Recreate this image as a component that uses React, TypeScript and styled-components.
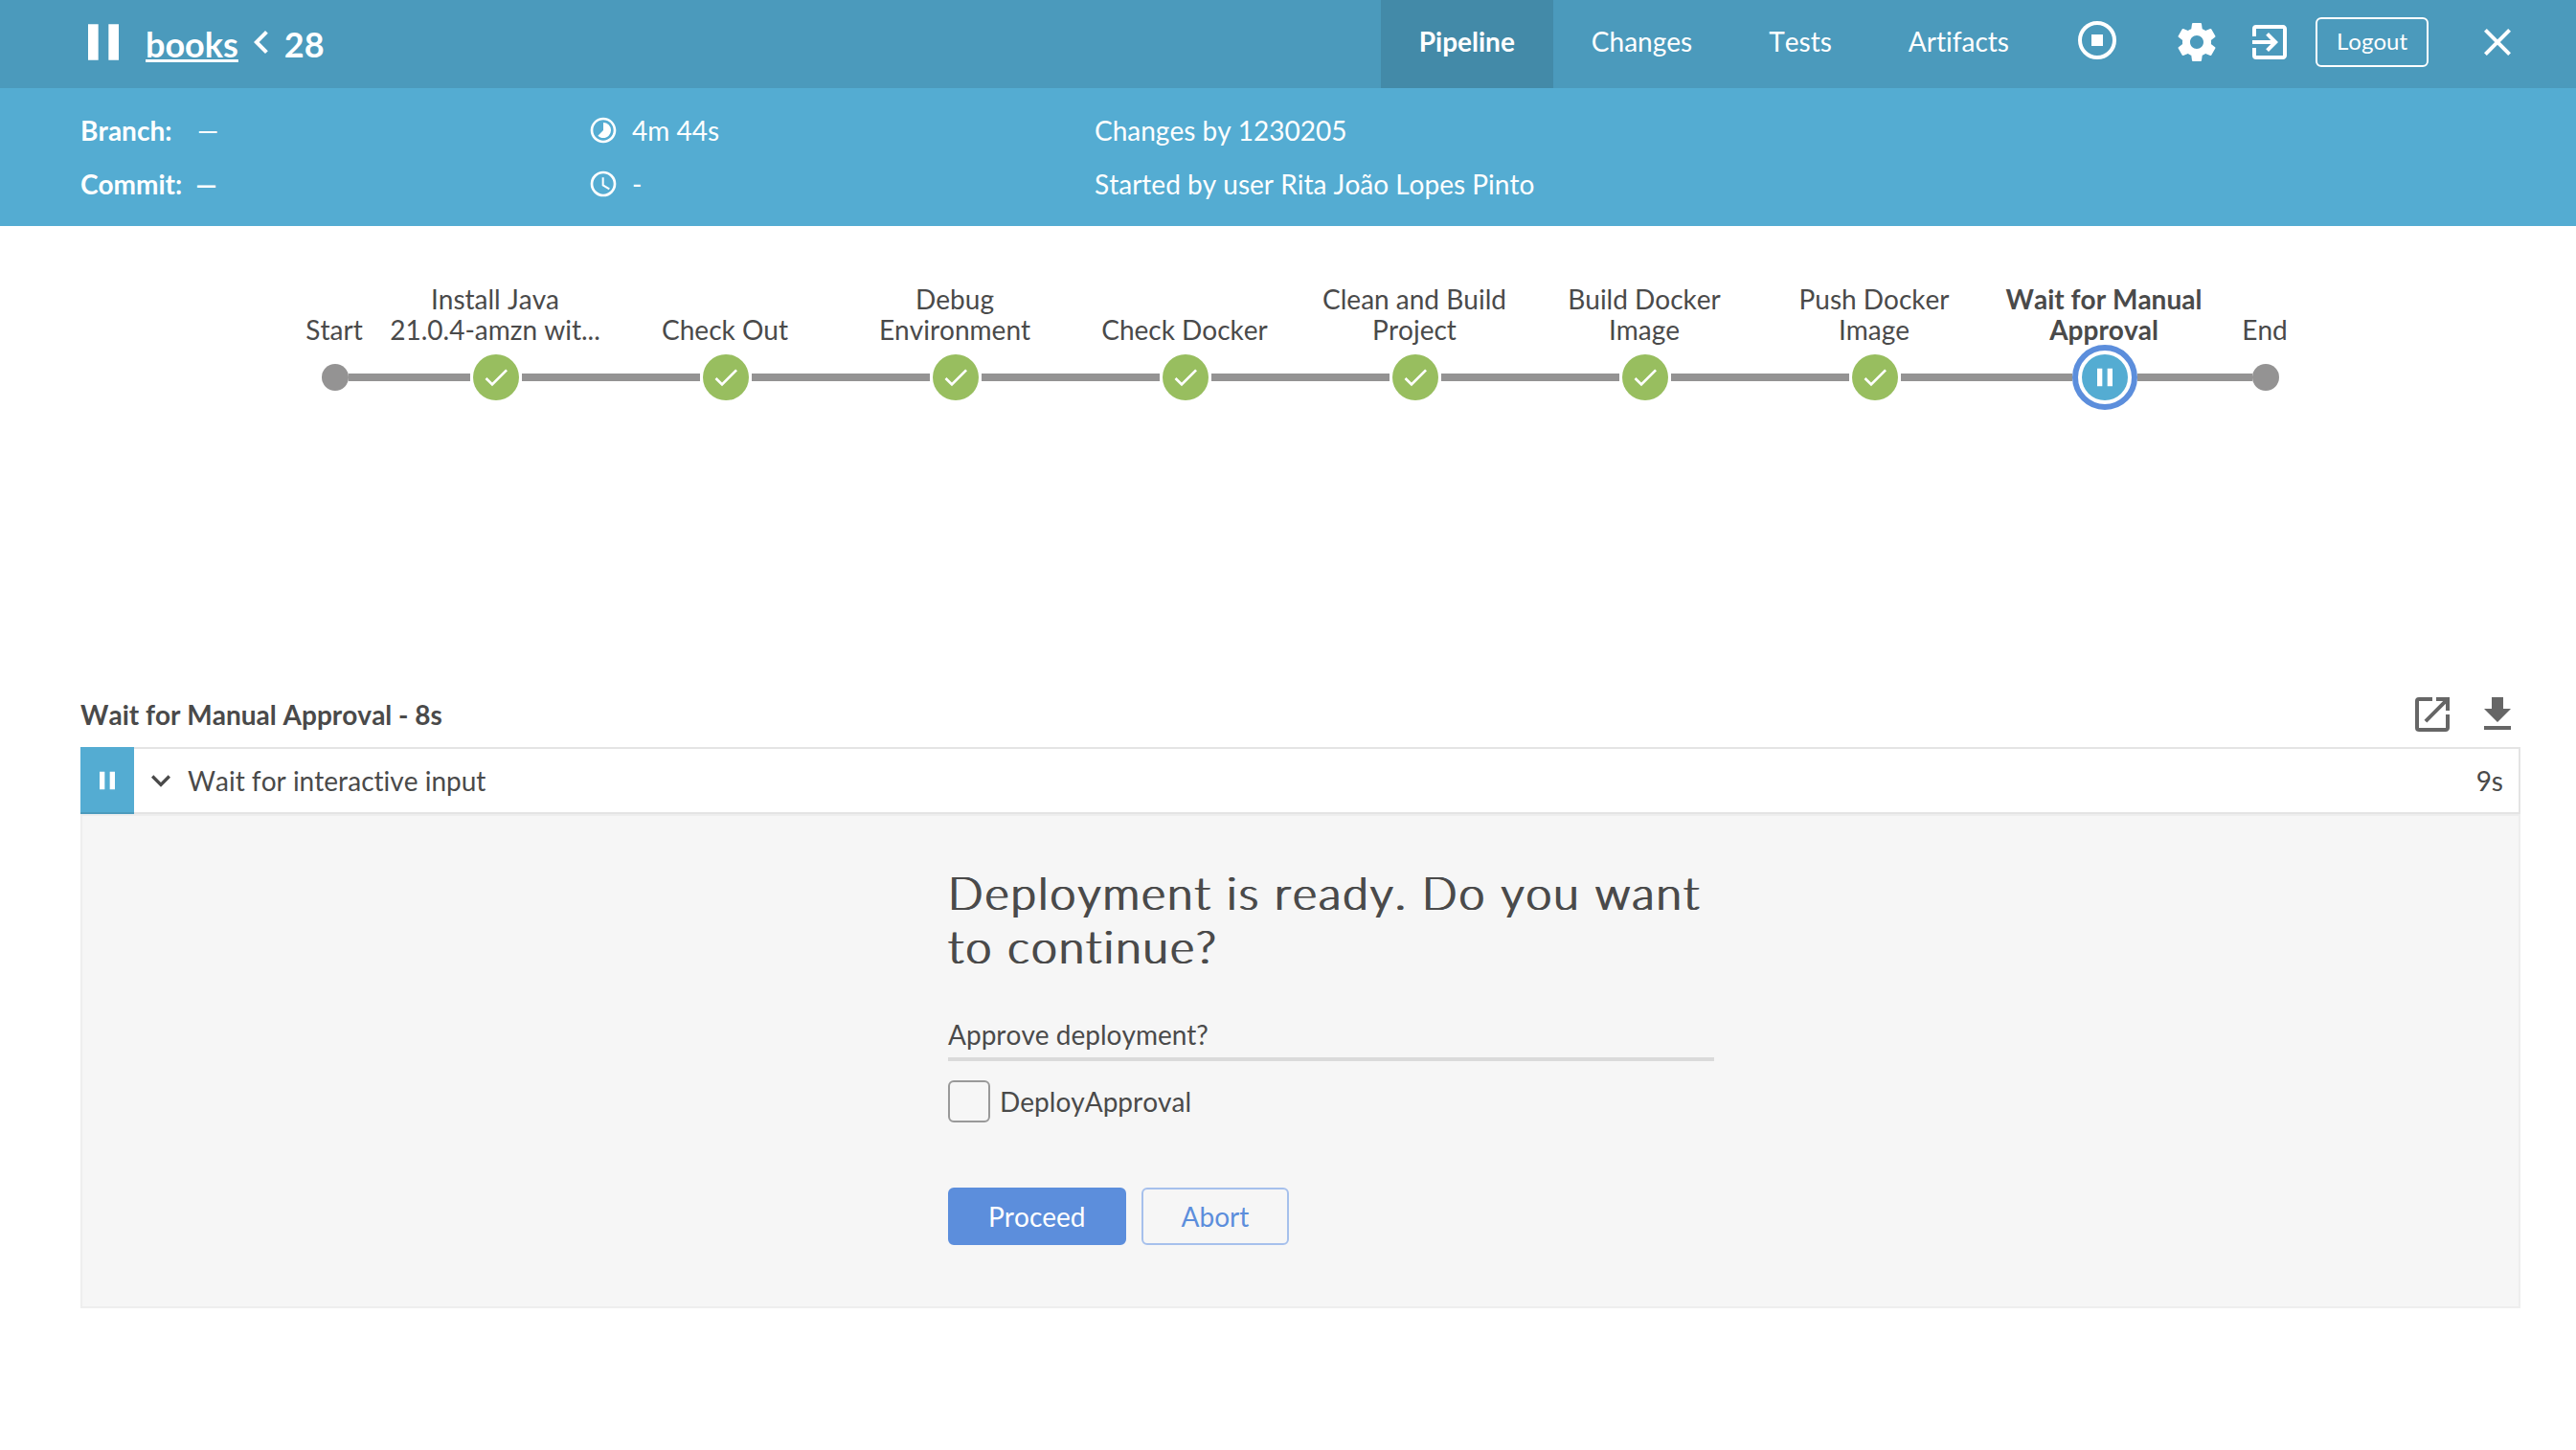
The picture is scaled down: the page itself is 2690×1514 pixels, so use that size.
import React from 'react';
import styled, { createGlobalStyle } from 'styled-components';
import {
  MdCheck,
  MdClose,
  MdExitToApp,
  MdExpandMore,
  MdFileDownload,
  MdKeyboardArrowLeft,
  MdOpenInNew,
  MdPause,
  MdTimelapse,
} from 'react-icons/md';

const blue = '#54acd2';
const accent = '#5c8edc';
const ink = '#4a4a4a';
const track = '#949393';

const GlobalStyle = createGlobalStyle`
  * { box-sizing: border-box; }
  body {
    margin: 0;
    background: #fff;
    color: ${ink};
    font: 28px/32px Lato, "Open Sans", sans-serif;
    font-kerning: none;
    font-variant-ligatures: none;
  }
  svg { display: block; flex: none; }
`;

const Header = styled.header`
  background: ${blue};
  color: #fff;
`;

const TopBar = styled.div`
  display: flex;
  align-items: stretch;
  height: 92px;
  padding: 0 58px 0 76px;
  background: rgba(0, 0, 0, 0.1);
`;

const Title = styled.h1`
  flex: 1;
  display: flex;
  align-items: center;
  margin: 0;
  padding-bottom: 4px;
  font-size: 36px;
  line-height: 44px;
  font-weight: 700;
`;

const TitleText = styled.span`
  padding-top: 4px;
`;

const PipelineLink = styled.a`
  color: inherit;
  margin-left: 12px;
  padding-top: 4px;
  text-decoration: underline;
`;

const Tabs = styled.nav`
  display: flex;
`;

const Tab = styled.a<{ $active?: boolean }>`
  display: flex;
  align-items: center;
  padding: 0 40px 6px;
  color: #fff;
  text-decoration: none;
  font-weight: ${(p) => (p.$active ? 700 : 400)};
  background: ${(p) => (p.$active ? 'rgba(0, 0, 0, 0.1)' : 'none')};
`;

const Tools = styled.div`
  display: flex;
  align-items: center;
  padding: 0 0 4px 28px;
`;

const IconButton = styled.button<{ $gap?: number }>`
  display: flex;
  padding: 0;
  margin: 0 0 0 ${(p) => p.$gap ?? 0}px;
  border: 0;
  background: none;
  color: inherit;
  cursor: pointer;
`;

const Logout = styled.button`
  height: 52px;
  margin-left: 24px;
  padding: 0 20px 2px;
  border: 2px solid #fff;
  border-radius: 6px;
  background: none;
  color: #fff;
  font: 24px/32px Lato, sans-serif;
  font-kerning: none;
  cursor: pointer;
`;

const Details = styled.div`
  display: grid;
  grid-template-columns: 530px 529px 1fr;
  row-gap: 24px;
  padding: 28px 58px 28px 84px;
`;

const Detail = styled.div`
  display: flex;
  align-items: center;
  gap: 14px;
`;

const Label = styled.span`
  font-weight: 700;
`;

const BranchLabel = styled(Label)`
  min-width: 108px;
`;

const Value = styled.span<{ $bold?: boolean }>`
  font-weight: ${(p) => (p.$bold ? 700 : 400)};
`;

const Main = styled.main`
  padding: 60px 58px 0 84px;
`;

const Graph = styled.ol`
  display: flex;
  justify-content: center;
  margin: 0;
  padding: 0;
  min-height: 420px;
  list-style: none;
`;

const Stage = styled.li<{ $end?: boolean }>`
  display: flex;
  flex-direction: column;
  width: ${(p) => (p.$end ? 96 : 240)}px;
`;

const StageLabel = styled.span<{ $bold?: boolean }>`
  display: flex;
  flex-direction: column;
  justify-content: flex-end;
  height: 64px;
  padding: 0 10px 0 8px;
  text-align: center;
  font-weight: ${(p) => (p.$bold ? 700 : 400)};
`;

const NodeRow = styled.span`
  display: flex;
  align-items: center;
  height: 68px;
`;

const Line = styled.span<{ $hidden?: boolean }>`
  flex: 1;
  height: 8px;
  background: ${(p) => (p.$hidden ? 'transparent' : track)};
`;

const Dot = styled.span`
  width: 28px;
  height: 28px;
  border-radius: 50%;
  background: ${track};
`;

const Done = styled.span`
  display: grid;
  place-items: center;
  width: 48px;
  height: 48px;
  margin: 0 3px;
  border-radius: 50%;
  background: #98be5f;
  color: #fff;
`;

const Paused = styled.button`
  display: grid;
  place-items: center;
  width: 68px;
  height: 68px;
  padding: 4px;
  border: 6px solid ${accent};
  border-radius: 50%;
  background: ${blue};
  background-clip: content-box;
  color: #fff;
`;

const StepsHeader = styled.div`
  display: flex;
  align-items: flex-start;
  justify-content: space-between;
  height: 64px;
  padding-top: 6px;
  color: #666;
`;

const StepsTitle = styled.h2`
  margin: 0;
  font-size: 28px;
  line-height: 48px;
  color: ${ink};
`;

const Actions = styled.div`
  display: flex;
  gap: 20px;
`;

const Step = styled.div`
  display: flex;
  height: 70px;
  border: 2px solid #e4e4e4;
  border-left: 0;
`;

const StepStatus = styled.span`
  display: grid;
  place-items: center;
  width: 56px;
  margin: -2px 0;
  padding-top: 2px;
  background: ${blue};
  border-bottom: 2px solid #4c9bbd;
  color: #fff;
`;

const StepToggle = styled.button`
  flex: 1;
  display: flex;
  align-items: center;
  gap: 8px;
  padding: 0 16px 0 8px;
  border: 0;
  background: none;
  color: inherit;
  font: inherit;
  font-variant-ligatures: none;
  font-kerning: none;
  text-align: left;
`;

const StepName = styled.span`
  flex: 1;
`;

const Panel = styled.section`
  display: flex;
  justify-content: center;
  padding: 52px 0 64px 64px;
  border: 2px solid #eee;
  background: #f6f6f6;
`;

const Form = styled.form`
  width: 800px;
`;

const Question = styled.h3`
  margin: 0 0 48px;
  font-size: 48px;
  line-height: 56px;
  font-weight: 300;
  letter-spacing: 2px;
  text-shadow: 1px 0 0 ${ink}, -1px 0 0 ${ink};
`;

const Legend = styled.p`
  margin: 0 0 20px;
  padding-bottom: 8px;
  border-bottom: 4px solid #dadada;
`;

const CheckLabel = styled.label`
  display: flex;
  align-items: center;
  gap: 10px;
  margin-bottom: 68px;
`;

const CheckBox = styled.input`
  appearance: none;
  width: 44px;
  height: 44px;
  margin: 0;
  border: 2px solid #999;
  border-radius: 6px;
`;

const Buttons = styled.div`
  display: flex;
  gap: 16px;
`;

const FormButton = styled.button<{ $primary?: boolean }>`
  height: 60px;
  padding: 0 40px;
  border: 2px solid ${(p) => (p.$primary ? accent : '#a6c0ec')};
  border-radius: 6px;
  background: ${(p) => (p.$primary ? accent : 'none')};
  color: ${(p) => (p.$primary ? '#fff' : accent)};
  font: 28px/32px Lato, sans-serif;
  font-kerning: none;
`;

const StopIcon = () => (
  <svg width="48" height="48" viewBox="0 0 48 48" aria-hidden="true">
    <circle cx="24" cy="22" r="18" fill="none" stroke="currentColor" strokeWidth="4" />
    <rect x="18" y="16" width="12" height="12" fill="currentColor" />
  </svg>
);

const ClockIcon = () => (
  <svg width="32" height="32" viewBox="0 0 24 24" fill="none" stroke="currentColor" aria-hidden="true">
    <circle cx="12" cy="12" r="9" strokeWidth="2" />
    <path d="M11.75 7v6l5 3" strokeWidth="1.5" />
  </svg>
);

const GearIcon = () => (
  <svg width="48" height="48" viewBox="0 0 24 24" fill="currentColor" aria-hidden="true">
    <path d="M19.43 12.98c.04-.32.07-.64.07-.98s-.03-.66-.07-.98l2.11-1.65c.19-.15.24-.42.12-.64l-2-3.46c-.12-.22-.39-.3-.61-.22l-2.49 1c-.52-.4-1.08-.73-1.69-.98l-.38-2.65C14.46 2.18 14.25 2 14 2h-4c-.25 0-.46.18-.49.42l-.38 2.65c-.61.25-1.17.59-1.69.98l-2.49-1c-.23-.09-.49 0-.61.22l-2 3.46c-.13.22-.07.49.12.64l2.11 1.65c-.04.32-.07.65-.07.98s.03.66.07.98l-2.11 1.65c-.19.15-.24.42-.12.64l2 3.46c.12.22.39.3.61.22l2.49-1c.52.4 1.08.73 1.69.98l.38 2.65c.03.24.24.42.49.42h4c.25 0 .46-.18.49-.42l.38-2.65c.61-.25 1.17-.59 1.69-.98l2.49 1c.23.09.49 0 .61-.22l2-3.46c.12-.22.07-.49-.12-.64l-2.11-1.65zM12 15.5c-1.93 0-3.5-1.57-3.5-3.5s1.57-3.5 3.5-3.5 3.5 1.57 3.5 3.5-1.57 3.5-3.5 3.5z" />
  </svg>
);

const stages = [
  'Install Java 21.0.4-amzn wit...',
  'Check Out',
  'Debug Environment',
  'Check Docker',
  'Clean and Build Project',
  'Build Docker Image',
  'Push Docker Image',
];

export default function App() {
  return (
    <>
      <GlobalStyle />
      <Header>
        <TopBar>
          <Title>
            <MdPause size={64} />
            <PipelineLink href="#books">books</PipelineLink>
            <MdKeyboardArrowLeft size={48} />
            <TitleText>28</TitleText>
          </Title>
          <Tabs>
            <Tab href="#pipeline" $active>Pipeline</Tab>
            <Tab href="#changes">Changes</Tab>
            <Tab href="#tests">Tests</Tab>
            <Tab href="#artifacts">Artifacts</Tab>
          </Tabs>
          <Tools>
            <IconButton aria-label="Stop"><StopIcon /></IconButton>
            <IconButton aria-label="Configure" $gap={56}><GearIcon /></IconButton>
            <IconButton aria-label="Go to classic" $gap={28}><MdExitToApp size={48} /></IconButton>
            <Logout>Logout</Logout>
            <IconButton aria-label="Close" $gap={48}><MdClose size={48} /></IconButton>
          </Tools>
        </TopBar>
        <Details>
          <Detail><BranchLabel>Branch:</BranchLabel><Value>—</Value></Detail>
          <Detail><MdTimelapse size={32} /><Value>4m 44s</Value></Detail>
          <Detail>Changes by 1230205</Detail>
          <Detail><Label>Commit:</Label><Value $bold>—</Value></Detail>
          <Detail><ClockIcon /><Value>-</Value></Detail>
          <Detail>Started by user Rita João Lopes Pinto</Detail>
        </Details>
      </Header>
      <Main>
        <Graph>
          <Stage $end>
            <StageLabel>Start</StageLabel>
            <NodeRow><Line $hidden /><Dot /><Line /></NodeRow>
          </Stage>
          {stages.map((name) => (
            <Stage key={name}>
              <StageLabel>{name}</StageLabel>
              <NodeRow><Line /><Done><MdCheck size={32} /></Done><Line /></NodeRow>
            </Stage>
          ))}
          <Stage>
            <StageLabel $bold>Wait for Manual Approval</StageLabel>
            <NodeRow>
              <Line />
              <Paused aria-label="Wait for Manual Approval">
                <MdPause size={32} />
              </Paused>
              <Line />
            </NodeRow>
          </Stage>
          <Stage $end>
            <StageLabel>End</StageLabel>
            <NodeRow><Line /><Dot /><Line $hidden /></NodeRow>
          </Stage>
        </Graph>
        <StepsHeader>
          <StepsTitle>Wait for Manual Approval - 8s</StepsTitle>
          <Actions>
            <IconButton aria-label="Open log"><MdOpenInNew size={48} /></IconButton>
            <IconButton aria-label="Download log"><MdFileDownload size={48} /></IconButton>
          </Actions>
        </StepsHeader>
        <Step>
          <StepStatus><MdPause size={32} /></StepStatus>
          <StepToggle aria-expanded="true">
            <MdExpandMore size={40} />
            <StepName>Wait for interactive input</StepName>
            <span>9s</span>
          </StepToggle>
        </Step>
        <Panel>
          <Form onSubmit={(e) => e.preventDefault()}>
            <Question>Deployment is ready. Do you want to continue?</Question>
            <Legend>Approve deployment?</Legend>
            <CheckLabel><CheckBox type="checkbox" name="DeployApproval" />DeployApproval</CheckLabel>
            <Buttons>
              <FormButton type="submit" $primary>Proceed</FormButton>
              <FormButton type="button">Abort</FormButton>
            </Buttons>
          </Form>
        </Panel>
      </Main>
    </>
  );
}
